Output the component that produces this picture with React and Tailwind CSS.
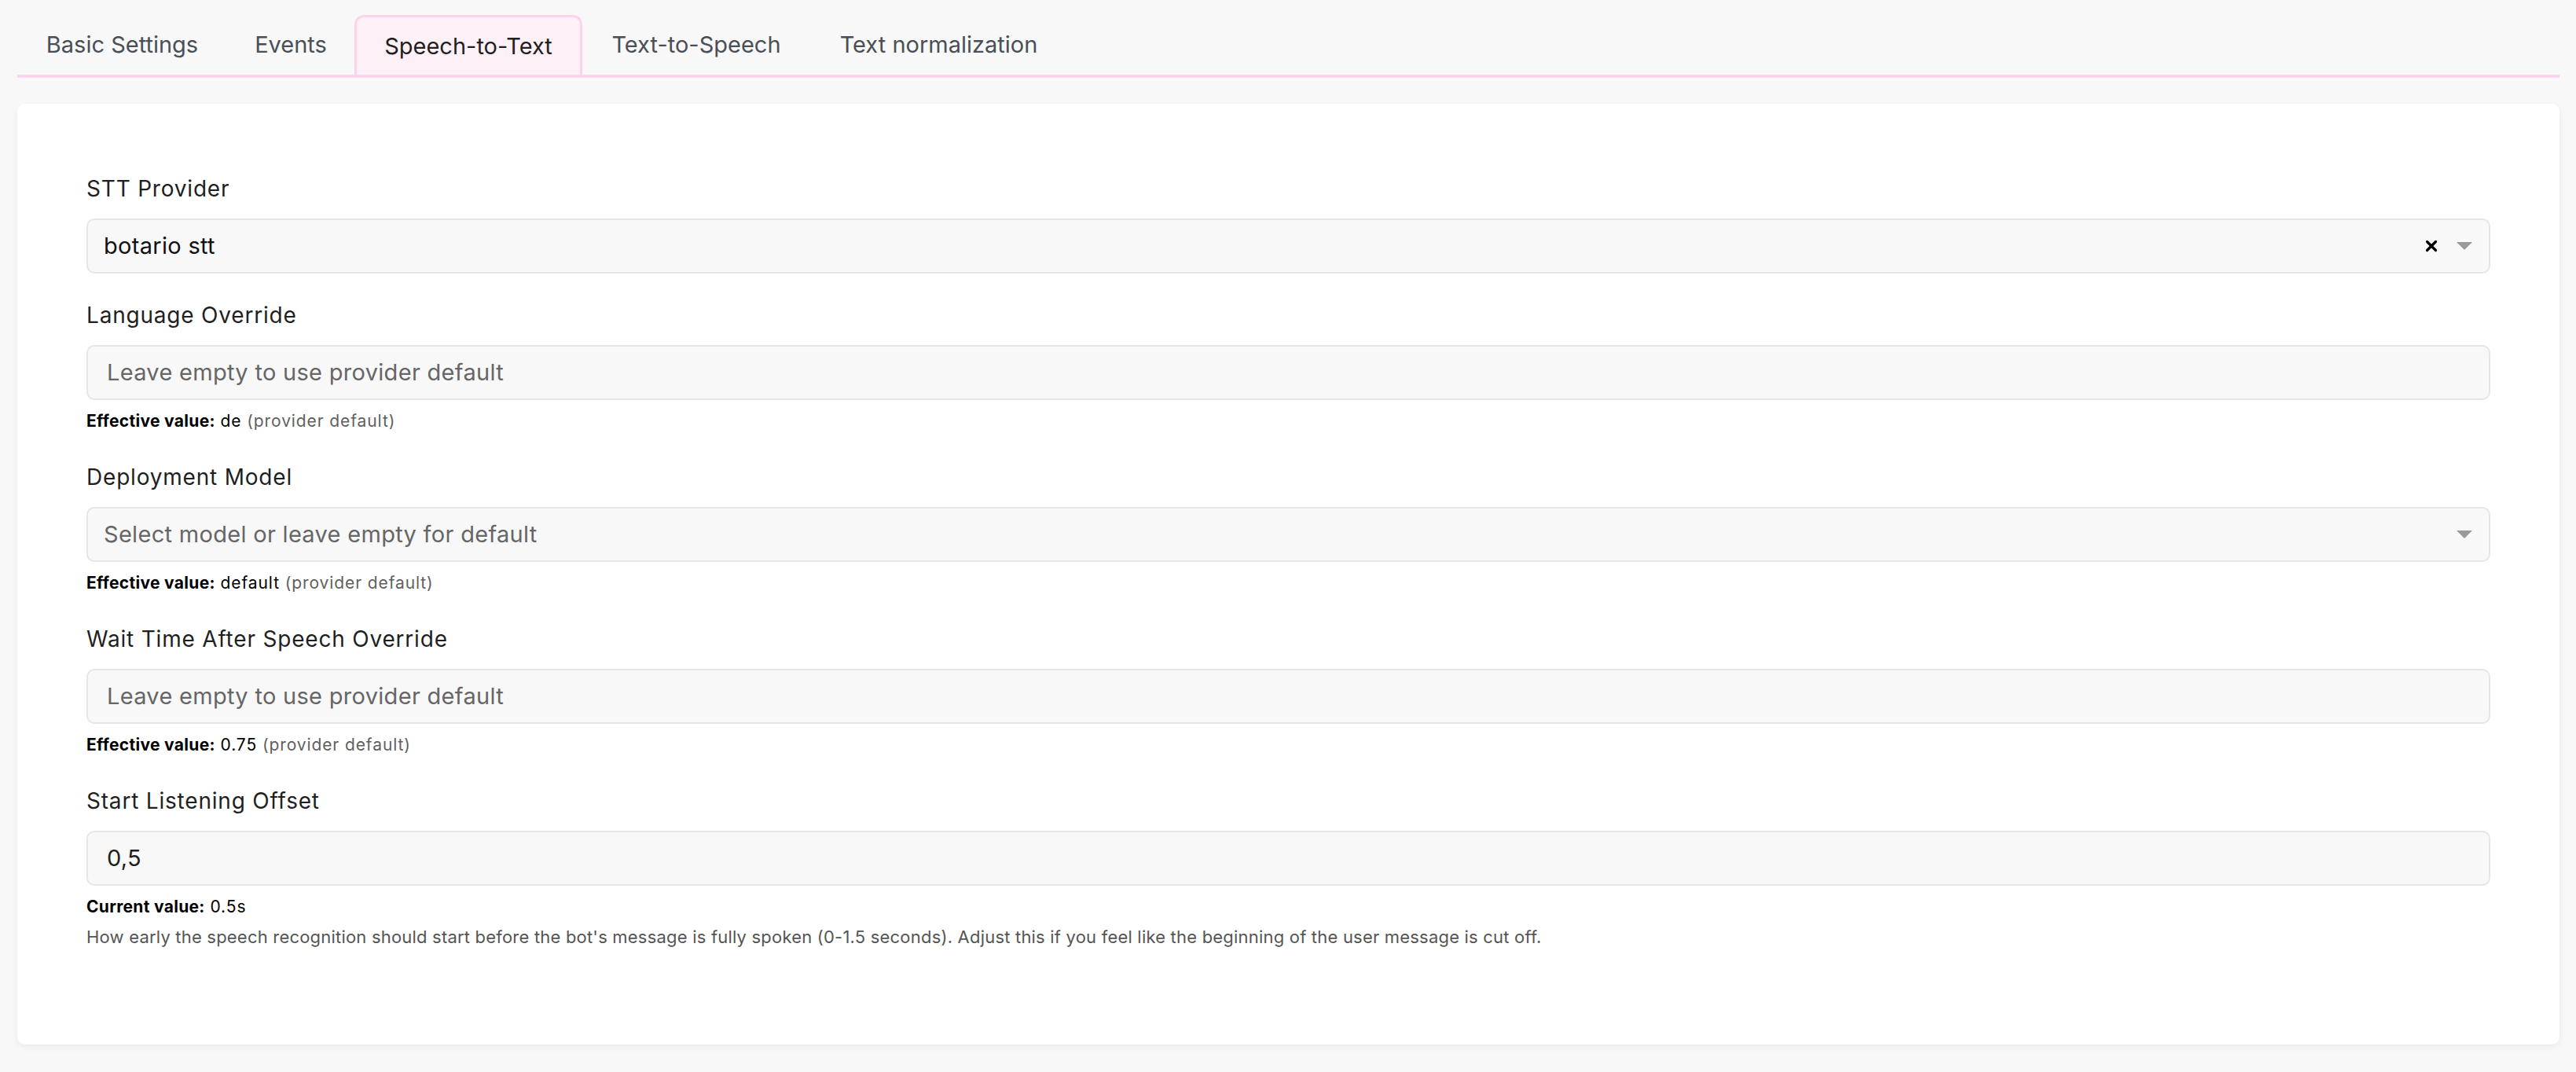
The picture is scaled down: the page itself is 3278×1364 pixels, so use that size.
import { X } from 'lucide-react'

const tabs = [
  { label: 'Basic Settings', w: 'w-[267px]' },
  { label: 'Events', w: 'w-[162px]' },
  { label: 'Speech-to-Text', w: 'w-[290px]', active: true },
  { label: 'Text-to-Speech', w: 'w-[290px]' },
  { label: 'Text normalization', w: 'w-[327px]' },
]

function Caret() {
  return (
    <svg width="22" height="12" viewBox="0 0 22 12" className="shrink-0">
      <path d="M1 1 L21 1 L11 11 Z" fill="#9a9a9a" />
    </svg>
  )
}

function Label({ children }) {
  return (
    <div className="text-[28px] leading-[36px] tracking-[0.8px] text-[#1f1f1f] mb-[20px]">{children}</div>
  )
}

function Hint({ k, v, note }) {
  return (
    <div className="mt-[13px] text-[21px] leading-[28px] tracking-[0.9px] text-black">
      <span className="font-bold tracking-[0.3px]">{k}</span> {v}
      {note && <span className="text-[#5f5f5f]"> {note}</span>}
    </div>
  )
}

function TextInput({ placeholder, value }) {
  return (
    <div className="h-[70px] rounded-[10px] border-2 border-[#e6e6e6] bg-[#f8f8f8] px-[24px] flex items-center text-[29px] tracking-[0.3px]">
      {value ? (
        <span className="text-[#1f1f1f]">{value}</span>
      ) : (
        <span className="text-[#666666]">{placeholder}</span>
      )}
    </div>
  )
}

function Select({ value, placeholder, clearable }) {
  return (
    <div className="h-[70px] rounded-[10px] border-2 border-[#e6e6e6] bg-[#f8f8f8] pl-[20px] pr-[20px] flex items-center text-[29px] tracking-[0.3px]">
      <span className={value ? 'flex-1 text-[#111111]' : 'flex-1 text-[#666666]'}>
        {value || placeholder}
      </span>
      {clearable && <X size={22} strokeWidth={3.5} className="text-black mr-[20px]" />}
      <Caret />
    </div>
  )
}

export default function App() {
  return (
    <div
      className="min-h-screen bg-[#f8f8f8] pl-[22px] pr-[21px] pt-[19px] pb-[36px]"
      style={{ fontFamily: 'Inter, "Noto Sans", sans-serif' }}
    >
      <div className="flex border-b-4 border-[#fcd3ea]">
        {tabs.map((t) => (
          <div
            key={t.label}
            className={
              t.active
                ? `${t.w} h-[76px] flex items-center justify-center text-[29px] text-[#1f1f1f] bg-[#fdf0f6] border-[3px] border-b-0 border-[#fcd3ea] rounded-t-[12px]`
                : `${t.w} h-[76px] flex items-center justify-center text-[29px] text-[#4a4f57]`
            }
          >
            {t.label}
          </div>
        ))}
      </div>

      <div className="mt-[33px] bg-white rounded-[10px] shadow-[0_3px_8px_rgba(0,0,0,0.06)] px-[88px] pt-[90px] pb-[123px]">
        <div>
          <Label>STT Provider</Label>
          <Select value="botario stt" clearable />
        </div>

        <div className="mt-[35px]">
          <Label>Language Override</Label>
          <TextInput placeholder="Leave empty to use provider default" />
          <Hint k="Effective value:" v="de" note="(provider default)" />
        </div>

        <div className="mt-[39px]">
          <Label>Deployment Model</Label>
          <Select placeholder="Select model or leave empty for default" />
          <Hint k="Effective value:" v="default" note="(provider default)" />
        </div>

        <div className="mt-[39px]">
          <Label>Wait Time After Speech Override</Label>
          <TextInput placeholder="Leave empty to use provider default" />
          <Hint k="Effective value:" v="0.75" note="(provider default)" />
        </div>

        <div className="mt-[39px]">
          <Label>Start Listening Offset</Label>
          <TextInput value="0,5" />
          <Hint k="Current value:" v="0.5s" />
          <div className="mt-[10px] text-[22px] leading-[28px] tracking-[0.2px] text-[#555555]">
            How early the speech recognition should start before the bot's message is fully spoken (0-1.5 seconds). Adjust this if you feel like the beginning of the user message is cut off.
          </div>
        </div>
      </div>
    </div>
  )
}
